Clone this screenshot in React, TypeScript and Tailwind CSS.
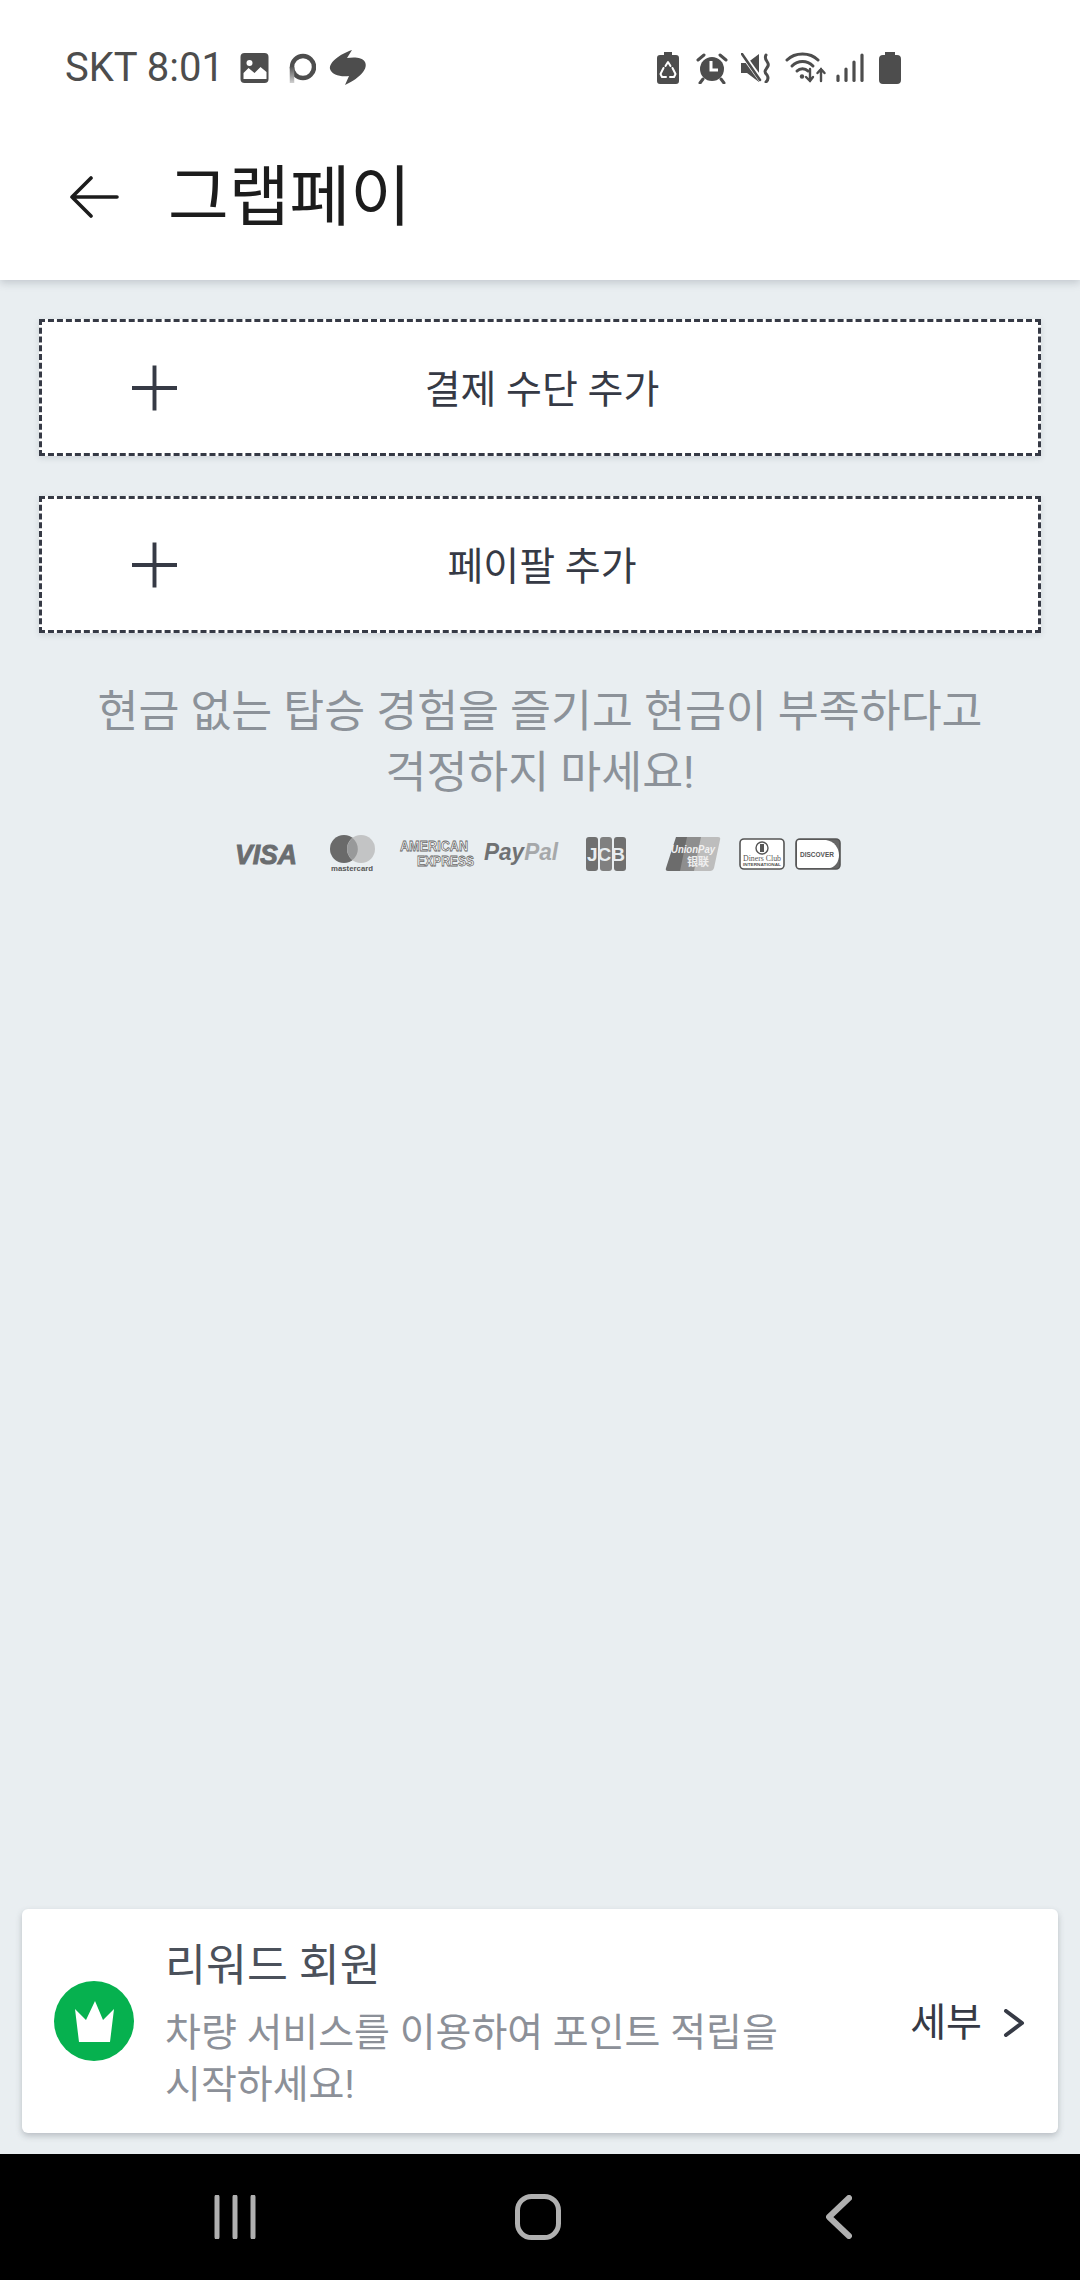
import React from "react";

const KR = "font-['Roboto','Noto_Sans_CJK_KR',sans-serif]";

function ImageIcon() {
  return (
    <svg width="29" height="30" viewBox="0 0 28 30" className="block">
      <rect width="28" height="30" rx="4" fill="#4d4d4d" />
      <circle cx="9" cy="10" r="3" fill="#fff" />
      <path d="M3 26 V20 L8 15 L14 20 L20 14 L26 19 V26 Z" fill="#fff" />
    </svg>
  );
}

function RingIcon() {
  return (
    <svg width="28" height="32" viewBox="0 0 28 32" className="block">
      <defs>
        <linearGradient id="ringFade" x1="0" y1="14" x2="0" y2="31" gradientUnits="userSpaceOnUse">
          <stop offset="0" stopColor="#4d4d4d" />
          <stop offset="1" stopColor="#d0d0d0" />
        </linearGradient>
      </defs>
      <circle cx="15" cy="15" r="11" fill="none" stroke="#4d4d4d" strokeWidth="4.5" />
      <path d="M4 15 V31" stroke="url(#ringFade)" strokeWidth="4.5" fill="none" />
    </svg>
  );
}

function BoltBlob() {
  return (
    <svg width="37" height="36" viewBox="0 0 37 36" className="block overflow-visible">
      <path
        d="M22 0 L17 8 C24 7 32 7 35 12 C38 18 32 27 15 35 L19 26 C10 27 2 25 0 19 C-1 12 10 4 22 0 Z"
        fill="#4d4d4d"
      />
    </svg>
  );
}

function BatterySaver() {
  return (
    <svg width="22" height="32" viewBox="0 0 22 32" className="block">
      <path d="M7 0 H15 V3 H19 Q22 3 22 6 V29 Q22 32 19 32 H3 Q0 32 0 29 V6 Q0 3 3 3 H7 Z" fill="#4d4d4d" />
      <path d="M8.5 14 L11 10 L13.5 14 M15.5 16 L18.5 22 L17 25 H13 M9 25 H5 L3.5 22 L6.5 16" stroke="#fff" strokeWidth="2" fill="none" strokeLinecap="round" strokeLinejoin="round" />
    </svg>
  );
}

function AlarmIcon() {
  return (
    <svg width="32" height="32" viewBox="0 0 32 32" className="block">
      <circle cx="16" cy="17" r="12" fill="#4d4d4d" />
      <path d="M2 8 L8 3 M30 8 L24 3 M7 27 L4 31 M25 27 L28 31" stroke="#4d4d4d" strokeWidth="3" strokeLinecap="round" />
      <path d="M15 9 V18 H22" stroke="#fff" strokeWidth="3" fill="none" />
    </svg>
  );
}

function MuteIcon() {
  return (
    <svg width="30" height="30" viewBox="0 0 30 30" className="block">
      <path d="M0 10 H6 L18 1 V29 L6 20 H0 Z" fill="#4d4d4d" />
      <path d="M2 2 L20 27" stroke="#fff" strokeWidth="5" />
      <path d="M1 1 L19 27" stroke="#4d4d4d" strokeWidth="2.6" strokeLinecap="round" />
      <path d="M25 2 C22 7 29 9 27 13 C25 17 22 18 26 22 C28 25 27 27 25 29" stroke="#4d4d4d" strokeWidth="3" fill="none" strokeLinecap="round" />
    </svg>
  );
}

function WifiIcon() {
  return (
    <svg width="41" height="32" viewBox="0 0 41 32" className="block">
      <g stroke="#4d4d4d" strokeWidth="3" fill="none" strokeLinecap="round">
        <path d="M2 8 C10 0 25 0 33 8" />
        <path d="M7 14 C13 8 22 8 28 14" />
        <path d="M12 19 C15 16 20 16 23 19" />
        <path d="M25 17 V29 M21 25 L25 29 L28 25" strokeWidth="2.4" />
        <path d="M36 29 V17 M32.5 21 L36 17 L39.5 21" strokeWidth="2.4" />
      </g>
      <circle cx="17" cy="24.5" r="2.2" fill="#4d4d4d" />
    </svg>
  );
}

function SignalIcon() {
  return (
    <svg width="28" height="30" viewBox="0 0 28 30" className="block">
      <g stroke="#4d4d4d" strokeWidth="3.2" strokeLinecap="round">
        <path d="M2 23 V27.5" />
        <path d="M10 16 V27.5" />
        <path d="M18 9 V27.5" />
        <path d="M26 2 V27.5" />
      </g>
    </svg>
  );
}

function BatteryIcon() {
  return (
    <svg width="22" height="32" viewBox="0 0 22 32" className="block">
      <path d="M6 0 H16 V3 H18 Q22 3 22 7 V28 Q22 32 18 32 H4 Q0 32 0 28 V7 Q0 3 4 3 H6 Z" fill="#4d4d4d" />
    </svg>
  );
}

function StatusBar() {
  return (
    <div className="flex h-[100px] items-start justify-between pt-[49px] pl-[65px] pr-[179px]">
      <div className="flex items-center">
        <span className="font-['Roboto',sans-serif] text-[40px] leading-[38px] text-[#4d4d4d] w-[175px] whitespace-nowrap">SKT 8:01</span>
        <ImageIcon />
        <span className="ml-[19px]"><RingIcon /></span>
        <span className="ml-[14px]"><BoltBlob /></span>
      </div>
      <div className="flex items-center h-[38px]">
        <BatterySaver />
        <span className="ml-[17px]"><AlarmIcon /></span>
        <span className="ml-[13px]"><MuteIcon /></span>
        <span className="ml-[14px]"><WifiIcon /></span>
        <span className="ml-[10px]"><SignalIcon /></span>
        <span className="ml-[15px]"><BatteryIcon /></span>
      </div>
    </div>
  );
}

function Header() {
  return (
    <div className="flex h-[180px] items-start pl-[70px] pt-[62px]">
      <svg width="50" height="42" viewBox="0 0 50 42" className="mt-[14px] block">
        <path d="M21 2 L2 21 L21 40 M2 21 H47" fill="none" stroke="#1c1c1c" strokeWidth="3.6" strokeLinecap="round" strokeLinejoin="round" />
      </svg>
      <span className={`${KR} ml-[48px] text-[66px] leading-[72px] text-[#1c1c1c] whitespace-nowrap`}>그랩페이</span>
    </div>
  );
}

function AddRow({ label }: { label: string }) {
  return (
    <div className="grid h-[137px] grid-cols-[1fr_auto_1fr] items-center border-[3px] border-dashed border-[#363a45] bg-white shadow-[0_2px_6px_rgba(60,70,80,0.15)]">
      <svg width="45" height="46" viewBox="0 0 46 46" className="ml-[90px] block">
        <path d="M23 0 V46 M0 23 H46" stroke="#363a45" strokeWidth="4" />
      </svg>
      <span className={`${KR} pt-[5px] pl-[4px] text-[39px] leading-[44px] text-[#363a45] whitespace-nowrap`}>{label}</span>
      <span />
    </div>
  );
}

const logoFont = { fontFamily: "Liberation Sans, sans-serif" };

function CardLogos() {
  return (
    <div className="mt-[28px] flex h-[44px] items-center pl-[235px]">
      <svg width="64" height="30" viewBox="0 0 64 30" className="block overflow-visible">
        <text x="0" y="25" fontSize="28" fontWeight="700" fontStyle="italic" fill="#6a6d70" stroke="#6a6d70" strokeWidth="1" style={logoFont} textLength="62" lengthAdjust="spacingAndGlyphs">VISA</text>
      </svg>
      <svg width="46" height="38" viewBox="0 0 46 38" className="ml-[31px] block overflow-visible">
        <circle cx="14" cy="14" r="14" fill="#6a6a6a" />
        <circle cx="31" cy="14" r="14" fill="#c3c4c5" />
        <path d="M22.5 3 A14 14 0 0 1 22.5 25 A14 14 0 0 1 22.5 3 Z" fill="#98999a" />
        <text x="1" y="36" fontSize="8" fontWeight="700" fill="#555" style={logoFont} textLength="42" lengthAdjust="spacingAndGlyphs">mastercard</text>
      </svg>
      <svg width="74" height="30" viewBox="0 0 74 30" className="ml-[24px] block overflow-visible">
        <text x="0" y="12" fontSize="15" fontWeight="700" fill="#fff" stroke="#666" strokeWidth="0.8" style={logoFont} textLength="68" lengthAdjust="spacingAndGlyphs">AMERICAN</text>
        <text x="17" y="27" fontSize="15" fontWeight="700" fill="#fff" stroke="#666" strokeWidth="0.8" style={logoFont} textLength="57" lengthAdjust="spacingAndGlyphs">EXPRESS</text>
      </svg>
      <svg width="75" height="26" viewBox="0 0 75 26" className="ml-[10px] block overflow-visible">
        <text x="0" y="19" fontSize="24" fontWeight="700" fontStyle="italic" style={logoFont} textLength="74" lengthAdjust="spacingAndGlyphs">
          <tspan fill="#6f7173">Pay</tspan>
          <tspan fill="#a6a8aa">Pal</tspan>
        </text>
      </svg>
      <svg width="41" height="34" viewBox="0 0 41 34" className="ml-[27px] block overflow-visible">
        <rect x="0" y="0" width="12" height="34" rx="3" fill="#707070" />
        <rect x="14" y="0" width="12" height="34" rx="3" fill="#808080" />
        <rect x="28" y="0" width="12" height="34" rx="3" fill="#707070" />
        <text x="1" y="24" fontSize="19" fontWeight="700" fill="#e8edf0" style={logoFont} textLength="38" lengthAdjust="spacingAndGlyphs">JCB</text>
      </svg>
      <svg width="56" height="34" viewBox="0 0 56 34" className="ml-[38px] block overflow-visible">
        <path d="M11 0 H24 L17 34 H3 Q0 34 1 31 Z" fill="#6c6c6c" />
        <path d="M22 0 H38 L31 34 H15 Z" fill="#8e8e8e" />
        <path d="M36 0 H53 Q56 0 55 3 L49 31 Q48 34 45 34 H29 Z" fill="#bdbdbd" />
        <text x="6" y="16" fontSize="11" fontWeight="700" fontStyle="italic" fill="#f2f2f2" style={logoFont} textLength="44" lengthAdjust="spacingAndGlyphs">UnionPay</text>
        <text x="22" y="29" fontSize="11" fontWeight="700" fill="#eee" fontFamily="Noto Sans CJK SC, sans-serif">银联</text>
      </svg>
      <svg width="46" height="32" viewBox="0 0 46 32" className="ml-[18px] block overflow-visible">
        <rect x="1" y="1" width="44" height="30" rx="4" fill="#fff" stroke="#555" strokeWidth="1.6" />
        <circle cx="23" cy="10" r="6" fill="#fff" stroke="#555" strokeWidth="1.4" />
        <rect x="21" y="6" width="4" height="8" fill="#555" />
        <text x="4" y="23" fontSize="7.5" fill="#555" fontFamily="Liberation Serif, serif" textLength="38" lengthAdjust="spacingAndGlyphs">Diners Club</text>
        <text x="4" y="28" fontSize="3.6" fontWeight="700" fill="#555" style={logoFont} textLength="38" lengthAdjust="spacingAndGlyphs">INTERNATIONAL</text>
      </svg>
      <svg width="46" height="32" viewBox="0 0 46 32" className="ml-[10px] block overflow-visible">
        <rect x="1" y="1" width="44" height="30" rx="4" fill="#666" stroke="#555" strokeWidth="1.6" />
        <path d="M4 2 H31 C39 3 44 10 44 17 C44 24 40 29 35 30 H4 Q2 30 2 28 V4 Q2 2 4 2 Z" fill="#fff" />
        <text x="5" y="19" fontSize="7" fontWeight="700" fill="#555" style={logoFont} textLength="34" lengthAdjust="spacingAndGlyphs">DISCOVER</text>
      </svg>
    </div>
  );
}

function RewardCard() {
  return (
    <div className="mx-[22px] flex h-[224px] items-start rounded-[6px] bg-white pl-[32px] pr-[33px] shadow-[0_3px_6px_rgba(60,70,80,0.28)]">
      <div className="mt-[72px] flex h-[80px] w-[80px] shrink-0 items-center justify-center rounded-full bg-[#06b14f]">
        <svg width="39" height="41" viewBox="0 0 39 41" className="block">
          <path d="M0 8 L11 19 L20 0 L28 19 L39 8 L35 41 H4 Z" fill="#fff" />
        </svg>
      </div>
      <div className="ml-[31px] w-[640px] shrink-0 pt-[32px]">
        <div className={`${KR} text-[44.5px] leading-[50px] text-[#4b515b] whitespace-nowrap`}>리워드 회원</div>
        <div className={`${KR} mt-[16px] text-[39px] leading-[52px] text-[#8c9098]`}>차량 서비스를 이용하여 포인트 적립을<br />시작하세요!</div>
      </div>
      <div className="ml-auto mt-[92px] flex items-center">
        <span className={`${KR} text-[39px] leading-[44px] text-[#363a45] whitespace-nowrap`}>세부</span>
        <svg width="22" height="28" viewBox="0 0 22 28" className="ml-[21px] block">
          <path d="M3 2 L19 14 L3 26" fill="none" stroke="#363a45" strokeWidth="4" strokeLinecap="round" strokeLinejoin="round" />
        </svg>
      </div>
    </div>
  );
}

function NavBar() {
  return (
    <div className="flex h-[126px] items-center bg-black pl-[214px]">
      <svg width="42" height="44" viewBox="0 0 42 44" className="block">
        <path d="M3 2 V42 M21 2 V42 M39 2 V42" stroke="#b0b0b0" strokeWidth="5" strokeLinecap="round" />
      </svg>
      <svg width="46" height="46" viewBox="0 0 46 46" className="ml-[259px] block">
        <rect x="2.5" y="2.5" width="41" height="41" rx="14" fill="none" stroke="#b0b0b0" strokeWidth="5" />
      </svg>
      <svg width="26" height="44" viewBox="0 0 26 44" className="ml-[265px] block">
        <path d="M23 3 L3 22 L23 41" fill="none" stroke="#b0b0b0" strokeWidth="6" strokeLinecap="round" strokeLinejoin="round" />
      </svg>
    </div>
  );
}

export default function App() {
  return (
    <div className="flex h-[2280px] w-[1080px] flex-col overflow-hidden bg-[#e9eef1]">
      <div className="relative z-10 bg-white shadow-[0_3px_8px_rgba(60,70,80,0.22)]">
        <StatusBar />
        <Header />
      </div>
      <main className="flex flex-1 flex-col px-[39px] pt-[39px]">
        <AddRow label="결제 수단 추가" />
        <div className="h-[40px]" />
        <AddRow label="페이팔 추가" />
        <p className={`${KR} mt-[49px] text-center text-[44.5px] leading-[61px] text-[#8c9299]`}>
          현금 없는 탑승 경험을 즐기고 현금이 부족하다고<br />걱정하지 마세요!
        </p>
        <div className="-mx-[39px]"><CardLogos /></div>
      </main>
      <div className="pb-[21px]"><RewardCard /></div>
      <NavBar />
    </div>
  );
}
